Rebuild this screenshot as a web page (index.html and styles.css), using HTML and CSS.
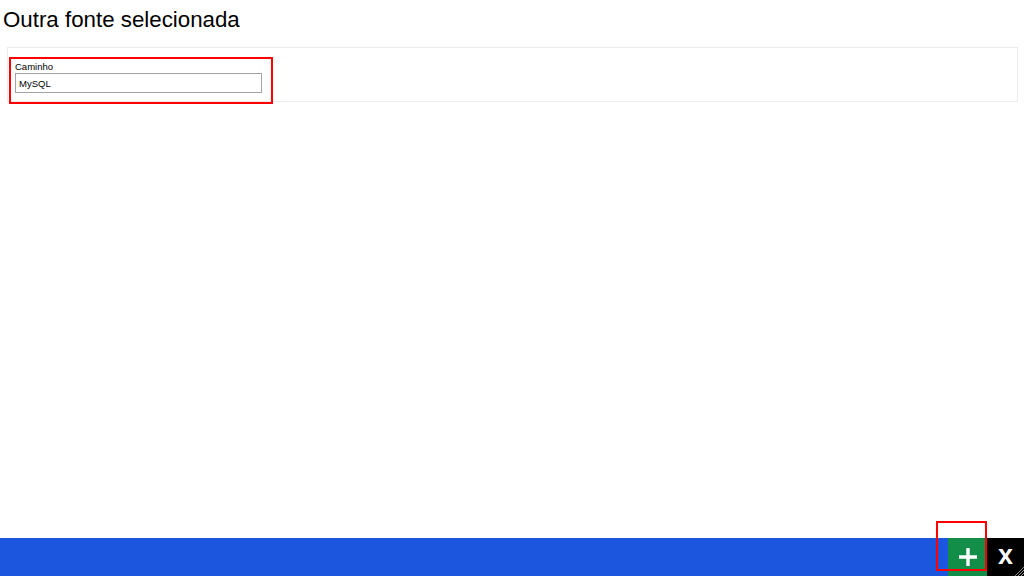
FILE: index.html
```html
<!DOCTYPE html>
<html lang="pt">

<head>
    <meta charset="UTF-8">
    <meta name="viewport" content="width=device-width, initial-scale=1.0">
    <title>Outra fonte selecionada</title>
    <link rel="stylesheet" href="styles.css">
</head>

<body>
    <div class="page">
        <h2 class="title">Outra fonte selecionada</h2>
        <div class="panel">  <!-- 區塊 -->
            <div class="field highlight">
                <label for="caminho">Caminho</label>
                <input type="text" id="caminho" name="caminho" value="MySQL">
            </div>
        </div>
    </div>

    <div class="toolbar">  <!-- 底部工具列 -->
        <div class="mark"></div>
        <button class="btn btn-add" title="Adicionar">
            <svg width="20" height="20" viewBox="0 0 20 20">
                <path d="M10 1v18M1 10h18" stroke="#fff" stroke-width="3.4" fill="none"/>
            </svg>
        </button>
        <button class="btn btn-close" title="Fechar">x</button>
        <svg class="grip" width="11" height="11" viewBox="0 0 11 11">
            <path d="M11 2L2 11M11 5L5 11M11 8L8 11" stroke="#888" stroke-width="1" fill="none"/>
        </svg>
    </div>
</body>

</html>
```

FILE: styles.css
```css
/* 基本樣式設定 */
html, body {
    height: 100%;
}

body {
    margin: 0;
    font-family: "Liberation Sans", Arial, sans-serif;
    color: #000;
    background: #fff;
    display: flex;
    flex-direction: column;
}

.page {
    flex: 1;
}

.title {
    margin: 0;
    padding: 7px 3px 0;
    height: 40px;
    font-size: 22.3px;
    font-weight: normal;
    line-height: 26px;
    box-sizing: border-box;
}

.panel {  /* 區塊樣式 */
    margin: 7px 6px 0 7px;
    height: 53px;
    border: 1px solid #ececec;
}

.field {
    margin: 11px 0 0 3px;
    width: 260px;
    height: 43px;
    padding: 2px 0 0 4px;
    box-sizing: border-box;
}

.highlight {  /* 紅色標示框 */
    outline: 2px solid #f00;
}

.field label {
    display: block;
    font-size: 9.5px;
    line-height: 12px;
}

.field input[type=text] {
    display: block;
    width: 247px;
    height: 20px;
    margin: 0;
    padding: 0 3px;
    border: 1px solid #a3a3a3;
    box-sizing: border-box;
    font-family: "Liberation Sans", Arial, sans-serif;
    font-size: 9.5px;
    color: #000;
}

.toolbar {  /* 底部工具列 */
    position: relative;
    height: 38px;
    background: #1c55de;
    display: flex;
    justify-content: flex-end;
}

.btn {
    border: none;
    padding: 0;
    margin: 0;
    height: 38px;
    cursor: pointer;
    display: flex;
    align-items: center;
    justify-content: center;
    color: #fff;
}

.btn-add {
    width: 39px;
    background: #128e48;
}

.btn-close {
    width: 37px;
    background: #000;
    font-family: "Liberation Sans", Arial, sans-serif;
    font-size: 27px;
    font-weight: bold;
    line-height: 38px;
    padding-bottom: 4px;
    box-sizing: border-box;
}

.mark {  /* 按鈕外的紅框 */
    position: absolute;
    right: 37px;
    top: -17px;
    width: 47px;
    height: 46px;
    border: 2px solid #f00;
    pointer-events: none;
}

.grip {
    position: absolute;
    right: 0;
    bottom: 0;
}
```
